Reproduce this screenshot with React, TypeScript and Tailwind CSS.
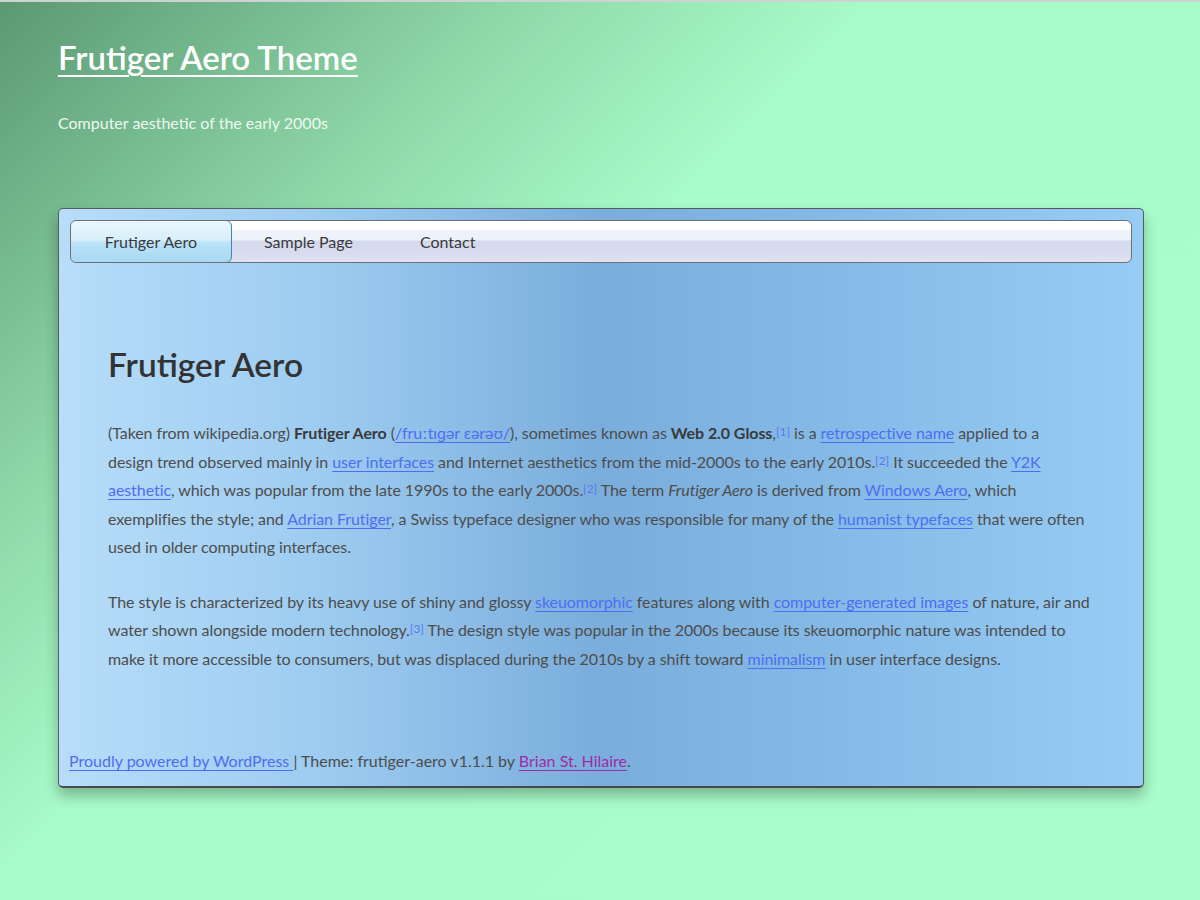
import React from "react";

const A = ({ children, visited = false }: { children: React.ReactNode; visited?: boolean }) => (
  <a
    href="#"
    className={
      visited
        ? "text-[#a02aa8] underline decoration-1 underline-offset-[3px]"
        : "text-[#4f6df2] underline decoration-1 underline-offset-[3px]"
    }
  >
    {children}
  </a>
);

const Sup = ({ n }: { n: number }) => (
  <sup className="text-[12px] leading-none relative -top-[3px]">
    <a href="#" className="text-[#5b78f0]">[{n}]</a>
  </sup>
);

export default function App() {
  return (
    <div
      className="min-h-screen w-full text-[#4d4d4d] bg-[linear-gradient(135deg,#5b9873_0%,#8fd9a9_25%,#a8fcc9_42%,#a9fdca_100%)] overflow-hidden"
      style={{ fontFamily: "Lato, 'Noto Sans', sans-serif" }}
    >
      <div className="h-[2px] bg-[#cdd3cf]" />
      <header className="pl-[58px] pt-[35px]">
        <h1 className="text-[33px] leading-[40px] font-semibold text-white">
          <a href="#" className="underline decoration-2 underline-offset-[5px]">
            Frutiger Aero Theme
          </a>
        </h1>
        <p className="mt-[34px] text-[16px] leading-[24px] text-[#eef8f0]">
          Computer aesthetic of the early 2000s
        </p>
      </header>

      <div className="ml-[58px] mr-[56px] mt-[73px] rounded-[5px] border border-[#555b60] border-b-2 border-b-[#454a4f] shadow-[0_8px_14px_rgba(0,0,0,0.28)] bg-[linear-gradient(90deg,#b7ddf9_0%,#9ccbf0_25%,#7aaddb_50%,#84b9e6_70%,#97ccf4_100%)]">
        <nav className="mx-[11px] mt-[11px] h-[43px] rounded-[6px] border border-[#6d7077] flex items-stretch text-[16px] text-[#3a3a3a] bg-[linear-gradient(180deg,#ffffff_0%,#ffffff_20%,#eef2fb_25%,#eef2fb_45%,#d4d9ec_50%,#d8dcee_80%,#e2e3f1_100%)] overflow-hidden">
          <a
            href="#"
            className="-m-px w-[162px] flex items-center justify-center rounded-[6px] border border-[#4583b5] bg-[linear-gradient(180deg,#eaf6fd_0%,#d8effb_45%,#b9e2f8_55%,#a8d9f4_100%)]"
          >
            Frutiger Aero
          </a>
          <a href="#" className="flex items-center px-[33px]">
            Sample Page
          </a>
          <a href="#" className="flex items-center px-[34px]">
            Contact
          </a>
        </nav>

        <main className="pl-[49px] pr-[20px] pt-[82px]">
          <h2 className="text-[33.5px] leading-[38px] font-semibold text-[#333]">Frutiger Aero</h2>
          <div className="mt-[36px] text-[16px] leading-[28.5px] tracking-[-0.07px]">
            <p>
              (Taken from wikipedia.org) <b className="text-[#3a3a3a]">Frutiger Aero</b> (
              <A>/fruːtɪɡər ɛərəʊ/</A>), sometimes known as <b className="text-[#3a3a3a]">Web 2.0 Gloss</b>,
              <Sup n={1} /> is a <A>retrospective name</A> applied to a
              <br />
              design trend observed mainly in <A>user interfaces</A> and Internet aesthetics from the mid-2000s
              to the early 2010s.
              <Sup n={2} /> It succeeded the <A>Y2K</A>
              <br />
              <A>aesthetic</A>, which was popular from the late 1990s to the early 2000s.
              <Sup n={2} /> The term <i>Frutiger Aero</i> is derived from <A>Windows Aero</A>, which
              <br />
              exemplifies the style; and <A>Adrian Frutiger</A>, a Swiss typeface designer who was responsible
              for many of the <A>humanist typefaces</A> that were often
              <br />
              used in older computing interfaces.
            </p>
            <p className="mt-[26px]">
              The style is characterized by its heavy use of shiny and glossy <A>skeuomorphic</A> features along
              with <A>computer-generated images</A> of nature, air and
              <br />
              water shown alongside modern technology.
              <Sup n={3} /> The design style was popular in the 2000s because its skeuomorphic nature was
              intended to
              <br />
              make it more accessible to consumers, but was displaced during the 2010s by a shift toward{" "}
              <A>minimalism</A> in user interface designs.
            </p>
          </div>
        </main>

        <footer className="px-[10px] pt-[74px] pb-[11px] text-[16px] leading-[28px]">
          <A>Proudly powered by WordPress </A>| Theme: frutiger-aero v1.1.1 by <A visited>Brian St. Hilaire</A>.
        </footer>
      </div>
    </div>
  );
}
